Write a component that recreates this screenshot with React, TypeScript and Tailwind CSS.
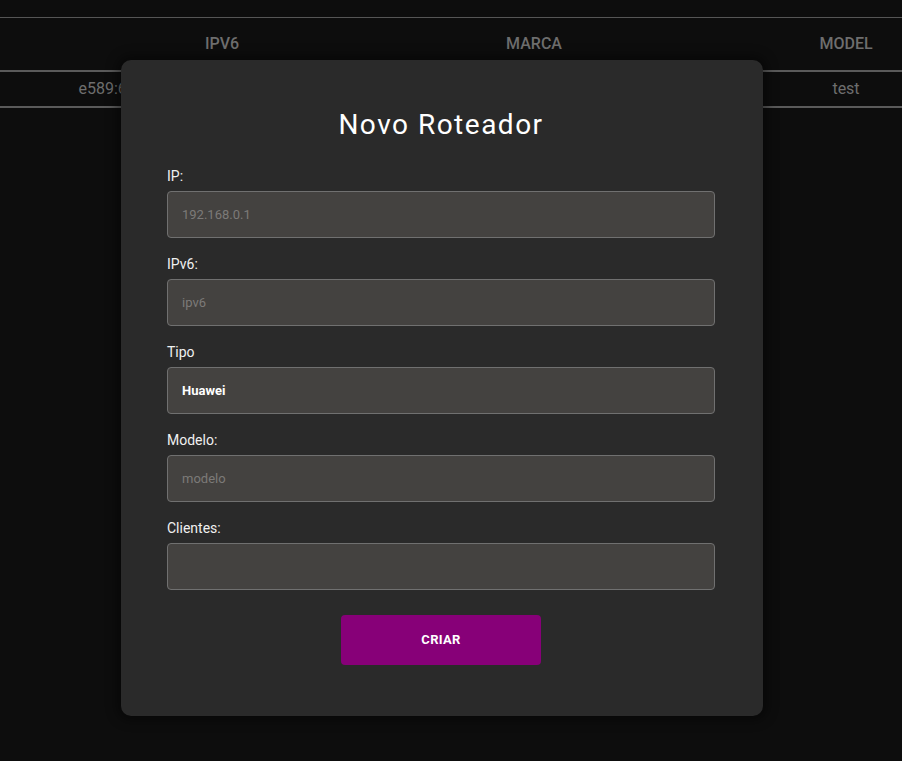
import React from 'react';

const columns = ['IPV6', 'MARCA', 'MODEL'];
const row = ['e589:6a3f:0c21:9b7e:44d2:1f08:aa31:7c', 'Huawei', 'test'];

const fields = [
    { label: 'IP:', placeholder: '192.168.0.1' },
    { label: 'IPv6:', placeholder: 'ipv6' },
    { label: 'Tipo', value: 'Huawei' },
    { label: 'Modelo:', placeholder: 'modelo' },
    { label: 'Clientes:', placeholder: '' },
];

const App = () => {
    return (
        <div className="relative w-full h-[761px] bg-[#0d0d0d] overflow-hidden font-['Roboto',sans-serif]">
            {/* Background table */}
            <div className="pt-[17px]">
                <div className="border-t border-[#555]">
                    <div className="flex h-[52px] items-center">
                        <div className="w-[66px] shrink-0" />
                        {columns.map((c) => (
                            <div key={c} className="w-[312px] shrink-0 text-center text-[16px] font-medium text-[#6e6e6e]">
                                {c}
                            </div>
                        ))}
                    </div>
                    <div className="border-t-2 border-[#5a5a5a] flex h-[36px] items-center">
                        <div className="w-[66px] shrink-0" />
                        {row.map((c, i) => (
                            <div key={i} className="w-[312px] shrink-0 text-center text-[16px] text-[#6e6e6e] whitespace-nowrap overflow-hidden">
                                {c}
                            </div>
                        ))}
                    </div>
                    <div className="border-t-2 border-[#5a5a5a]" />
                </div>
            </div>

            {/* Modal */}
            <div className="absolute left-[121px] top-[60px] w-[642px] h-[656px] bg-[#2a2a2a] rounded-[10px] shadow-[0_0_12px_4px_rgba(0,0,0,0.45)] pl-[46px] pr-[48px] pt-[48px]">
                <h2 className="text-center text-[28px] leading-[34px] tracking-[1.5px] text-white font-normal mb-[25px]">
                    Novo Roteador
                </h2>
                <div className="flex flex-col gap-[17px]">
                    {fields.map((f) => (
                        <div key={f.label} className="flex flex-col">
                            <label className="text-[14px] leading-[18px] text-[#f0f0f0] mb-[6px]">{f.label}</label>
                            <input
                                readOnly
                                placeholder={f.placeholder}
                                value={f.value ?? ''}
                                className="h-[47px] w-full rounded-[4px] border border-[#707070] bg-[#444240] px-[14px] text-[13px] font-bold text-white placeholder:font-normal placeholder:text-[#7c7a78] outline-none"
                            />
                        </div>
                    ))}
                </div>
                <div className="flex justify-center mt-[25px]">
                    <button className="w-[200px] h-[50px] rounded-[4px] bg-[#870078] text-white text-[13px] font-bold tracking-[0.3px]">
                        CRIAR
                    </button>
                </div>
            </div>
        </div>
    );
};

export default App;
